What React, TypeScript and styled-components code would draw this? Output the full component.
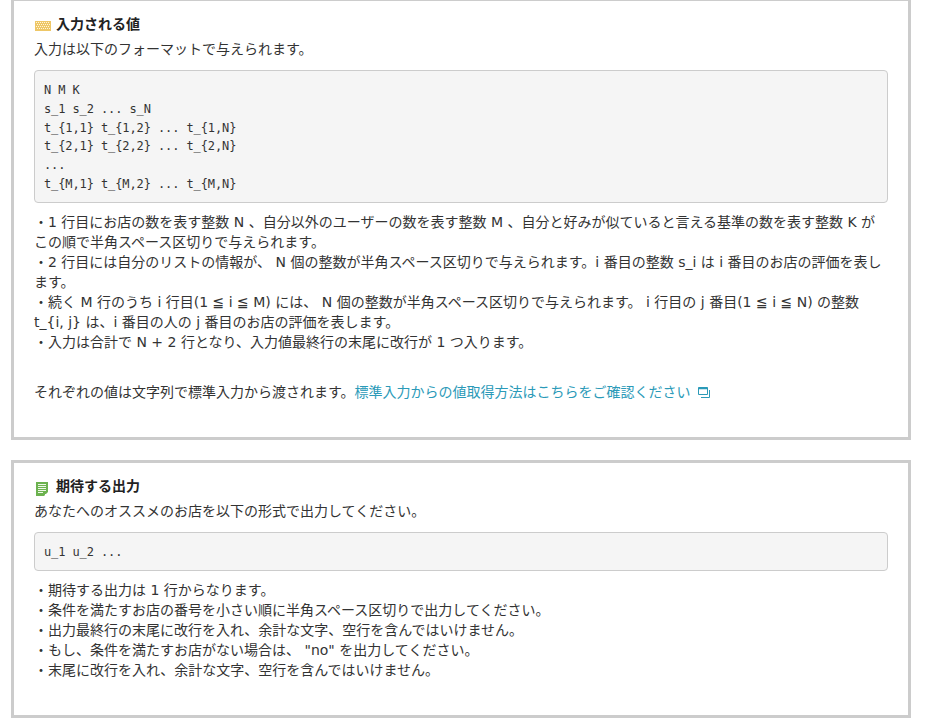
import React from "react";
import styled, { createGlobalStyle } from "styled-components";

const Global = createGlobalStyle`
  html, body { margin: 0; padding: 0; background: #fff; overflow: hidden; }
  body { font-family: "DejaVu Sans", "Noto Sans CJK JP", sans-serif; font-size: 14px; line-height: 20px; color: #333; }
`;

const Page = styled.main`
  width: 900px;
  margin: -2px 0 0 11px;
  display: flex;
  flex-direction: column;
  gap: 20px;
`;

const Section = styled.section<{ $height: number }>`
  box-sizing: border-box;
  height: ${(p) => p.$height}px;
  border: 3px solid #ccc;
  padding: 11px 20px 0;
`;

const Heading = styled.h2`
  display: flex;
  align-items: center;
  gap: 6px;
  margin: 0;
  height: 24px;
  font-size: 14px;
  font-weight: 700;
  color: #222;
`;

const Lead = styled.p`
  margin: 3px 0 11px;
`;

const Code = styled.pre`
  box-sizing: border-box;
  margin: 0 0 9px;
  padding: 10px 9px 8px;
  width: 854px;
  background: #f5f5f5;
  border: 1px solid #ccc;
  border-radius: 4px;
  font-family: "DejaVu Sans Mono", monospace;
  font-size: 12px;
  line-height: 18.8px;
  letter-spacing: -0.1px;
  color: #333;
`;

const Body = styled.p`
  margin: 0;
`;

const Note = styled.p`
  margin: 30px 0 0;
`;

const Link = styled.a`
  color: #2b9ab8;
  text-decoration: none;
`;

const External = styled.svg`
  width: 12px;
  height: 11px;
  margin-left: 7px;
  vertical-align: -1px;
`;

const KeyboardGlyph = styled.svg`
  margin: 4px -1px 0 1px;
`;

const DocGlyph = styled.svg`
  margin: 5px 2px 0;
`;

const KeyboardIcon = () => (
  <KeyboardGlyph width="16" height="10" viewBox="0 0 16 10" aria-hidden="true">
    <rect width="16" height="10" fill="#eec767" />
    {[1, 3, 5, 7].map((y, r) =>
      Array.from({ length: 7 }).map((_, i) => (
        <rect key={`${r}-${i}`} x={1 + i * 2 + (r % 2 ? 1 : 0)} y={y} width="1" height="1" fill="#fff6dc" />
      ))
    )}
  </KeyboardGlyph>
);

const DocIcon = () => (
  <DocGlyph width="12" height="14" viewBox="0 0 12 14" aria-hidden="true">
    <path d="M0 0h12v10l-4 4H0z" fill="#6cb24f" />
    <path d="M2 2.500h8M2 4.500h8M2 6.500h8M2 8.500h8M2 10.500h5" stroke="#eef7e8" strokeWidth="1" />
    <path d="M9 12h3l-2 2H9z" fill="#fff" />
  </DocGlyph>
);

export default function App() {
  return (
    <>
      <Global />
      <Page>
        <Section $height={442}>
          <Heading><KeyboardIcon />入力される値</Heading>
          <Lead>入力は以下のフォーマットで与えられます。</Lead>
          <Code>{`N M K
s_1 s_2 ... s_N
t_{1,1} t_{1,2} ... t_{1,N}
t_{2,1} t_{2,2} ... t_{2,N}
...
t_{M,1} t_{M,2} ... t_{M,N}`}</Code>
          <Body>
            ・1 行目にお店の数を表す整数 N 、自分以外のユーザーの数を表す整数 M 、自分と好みが似ていると言える基準の数を表す整数 K が<br />
            この順で半角スペース区切りで与えられます。<br />
            ・2 行目には自分のリストの情報が、 N 個の整数が半角スペース区切りで与えられます。i 番目の整数 s_i は i 番目のお店の評価を表します。<br />
            ・続く M 行のうち i 行目(1 ≦ i ≦ M) には、 N 個の整数が半角スペース区切りで与えられます。 i 行目の j 番目(1 ≦ i ≦ N) の整数<br />
            t_{"{"}i, j{"}"} は、i 番目の人の j 番目のお店の評価を表します。<br />
            ・入力は合計で N + 2 行となり、入力値最終行の末尾に改行が 1 つ入ります。
          </Body>
          <Note>
            それぞれの値は文字列で標準入力から渡されます。
            <Link href="#">
              標準入力からの値取得方法はこちらをご確認ください
              <External viewBox="0 0 12 11" aria-hidden="true">
                <path d="M.5.500h9v7h-9z" fill="none" stroke="#2b9ab8" strokeWidth="1" />
                <path d="M0 1.500h10" stroke="#2b9ab8" strokeWidth="1.500" />
                <path d="M11.500 3v7.500H3" fill="none" stroke="#2b9ab8" strokeWidth="1" />
              </External>
            </Link>
          </Note>
        </Section>
        <Section $height={258}>
          <Heading><DocIcon />期待する出力</Heading>
          <Lead>あなたへのオススメのお店を以下の形式で出力してください。</Lead>
          <Code>u_1 u_2 ...</Code>
          <Body>
            ・期待する出力は 1 行からなります。<br />
            ・条件を満たすお店の番号を小さい順に半角スペース区切りで出力してください。<br />
            ・出力最終行の末尾に改行を入れ、余計な文字、空行を含んではいけません。<br />
            ・もし、条件を満たすお店がない場合は、 "no" を出力してください。<br />
            ・末尾に改行を入れ、余計な文字、空行を含んではいけません。
          </Body>
        </Section>
      </Page>
    </>
  );
}
